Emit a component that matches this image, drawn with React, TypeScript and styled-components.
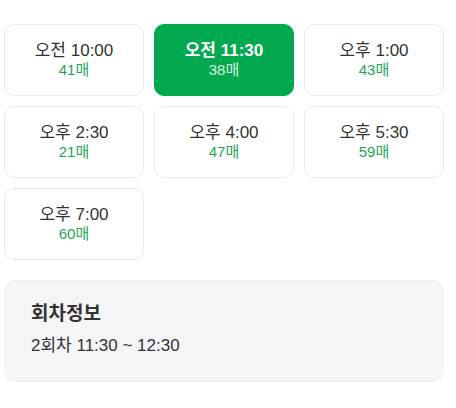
import React from "react";
import styled, { createGlobalStyle } from "styled-components";

const Global = createGlobalStyle`
  html, body { margin: 0; padding: 0; background: #fff; }
  body { font-family: "Liberation Sans", "Noto Sans CJK KR", sans-serif; }
`;

const Page = styled.div`
  width: 440px;
  padding: 24px 12px 0 4px;
  display: flex;
  flex-direction: column;
  gap: 20px;
`;

const Grid = styled.div`
  display: grid;
  grid-template-columns: repeat(3, 140px);
  gap: 10px;
`;

const Slot = styled.button<{ $active?: boolean }>`
  height: 72px;
  box-sizing: border-box;
  border-radius: 10px;
  border: 1px solid ${(p) => (p.$active ? "#03a94f" : "#ececec")};
  background: ${(p) => (p.$active ? "#03a94f" : "#fff")};
  display: flex;
  flex-direction: column;
  align-items: center;
  justify-content: center;
  gap: 0;
  padding: 0 0 2px;
  font-family: inherit;
  cursor: pointer;
`;

const Time = styled.span<{ $active?: boolean }>`
  font-size: 17px;
  line-height: 21px;
  color: ${(p) => (p.$active ? "#fff" : "#333")};
  font-weight: ${(p) => (p.$active ? 700 : 400)};
`;

const Count = styled.span<{ $active?: boolean }>`
  font-size: 15px;
  line-height: 18px;
  color: ${(p) => (p.$active ? "#d9f3e3" : "#1ea65a")};
`;

const Info = styled.div`
  box-sizing: border-box;
  height: 102px;
  border-radius: 12px;
  background: #f5f5f7;
  border: 1px solid #efeff1;
  padding: 21px 26px;
  display: flex;
  flex-direction: column;
  gap: 9px;
`;

const InfoTitle = styled.div`
  font-size: 19px;
  font-weight: 700;
  line-height: 24px;
  color: #333;
`;

const InfoText = styled.div`
  font-size: 17px;
  line-height: 22px;
  color: #333;
`;

const slots = [
  { t: "오전 10:00", c: "41매" },
  { t: "오전 11:30", c: "38매", active: true },
  { t: "오후 1:00", c: "43매" },
  { t: "오후 2:30", c: "21매" },
  { t: "오후 4:00", c: "47매" },
  { t: "오후 5:30", c: "59매" },
  { t: "오후 7:00", c: "60매" },
];

export default function App() {
  return (
    <>
      <Global />
      <Page>
        <Grid>
          {slots.map((s) => (
            <Slot key={s.t} $active={s.active}>
              <Time $active={s.active}>{s.t}</Time>
              <Count $active={s.active}>{s.c}</Count>
            </Slot>
          ))}
        </Grid>
        <Info>
          <InfoTitle>회차정보</InfoTitle>
          <InfoText>2회차 11:30 ~ 12:30</InfoText>
        </Info>
      </Page>
    </>
  );
}
